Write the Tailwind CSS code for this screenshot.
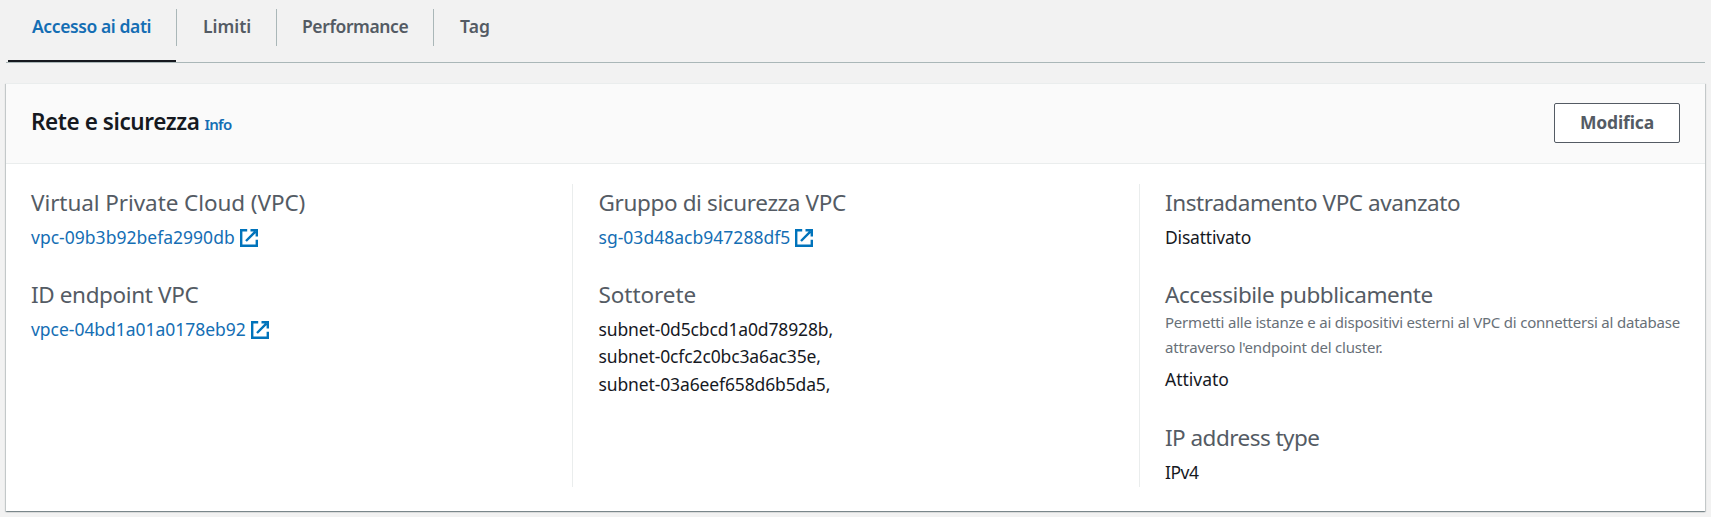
<!DOCTYPE html>
<html lang="it">
<head>
<meta charset="utf-8">
<title>Rete e sicurezza</title>
<script src="https://cdn.jsdelivr.net/npm/@tailwindcss/browser@4"></script>
</head>
<body class="h-[517px] overflow-hidden bg-[#f2f2f2] font-['Noto_Sans',sans-serif] text-[17.5px] leading-[27.5px] text-[#16191f]">
<svg class="hidden">
  <symbol id="ext" viewBox="0 0 18 18">
    <path d="M7.2 1.2H1.2v15.6h15.6V10.8M6 12L15.3 2.7M10.5 1.2h6.3V7.5" fill="none" stroke="currentColor" stroke-width="2.4"/>
  </symbol>
</svg>

<nav class="ml-[6px] mr-[6px] flex h-[63px] border-b border-[#aab7b8] font-semibold text-[#545b64]">
  <a class="ml-[2px] h-[62px] w-[168px] border-b-2 border-[#16191f] pl-[24px] pt-[13px] tracking-[-0.4px] whitespace-nowrap text-[#146eb4]">Accesso ai dati</a>
  <a class="mt-[9px] h-[37px] w-[100px] border-l border-[#aab7b8] pl-[26px] pt-[4px]">Limiti</a>
  <a class="mt-[9px] h-[37px] w-[157px] border-l border-[#aab7b8] pl-[25px] pt-[4px] tracking-[-0.4px]">Performance</a>
  <a class="mt-[9px] h-[37px] border-l border-[#aab7b8] pl-[26px] pt-[4px] tracking-[0.1px]">Tag</a>
</nav>

<section class="ml-[6px] mr-[6px] mt-[20px] h-[428px] border-t border-[#eaeded] bg-white shadow-[0_1px_1px_0_rgba(0,28,36,0.3),1px_1px_1px_0_rgba(0,28,36,0.15),-1px_1px_1px_0_rgba(0,28,36,0.15)]">
  <header class="flex h-[80px] items-start justify-between border-b border-[#eaeded] bg-[#fafafa] pl-[25px] pr-[25px]">
    <h2 class="flex items-baseline gap-[5px] pt-[20px] text-[22.5px] leading-[36px] font-semibold tracking-[-0.42px]">Rete e sicurezza <a class="text-[15px] tracking-[-0.7px] text-[#146eb4]">Info</a></h2>
    <button class="mt-[19px] h-[40px] w-[126px] rounded-[2px] border border-[#545b64] bg-white pb-[1px] font-bold tracking-[-0.15px] text-[#545b64]">Modifica</button>
  </header>

  <div class="mt-[20px] flex h-[303px] text-[#16191f]">
    <div class="w-[566px] pl-[25px]">
      <h3 class="pt-[1.5px] text-[22.5px] leading-[33px] tracking-[-0.08px] text-[#545b64]">Virtual Private Cloud (VPC)</h3>
      <a class="mt-[5px] flex items-center gap-[5px] tracking-[0.02px] text-[#146eb4]">vpc-09b3b92befa2990db<svg class="mt-[1px] size-[18px] text-[#0073bb]"><use href="#ext"/></svg></a>
      <h3 class="mt-[26.5px] text-[22.5px] leading-[33px] tracking-[-0.37px] text-[#545b64]">ID endpoint VPC</h3>
      <a class="mt-[5px] flex items-center gap-[5px] tracking-[-0.03px] text-[#146eb4]">vpce-04bd1a01a0178eb92<svg class="mt-[1px] size-[18px] text-[#0073bb]"><use href="#ext"/></svg></a>
    </div>
    <div class="w-[567px] border-l border-[#eaeded] pl-[25.5px]">
      <h3 class="pt-[1.5px] text-[22.5px] leading-[33px] tracking-[-0.37px] text-[#545b64]">Gruppo di sicurezza VPC</h3>
      <a class="mt-[5px] flex items-center gap-[5px] tracking-[0.02px] text-[#146eb4]">sg-03d48acb947288df5<svg class="mt-[1px] size-[18px] text-[#0073bb]"><use href="#ext"/></svg></a>
      <h3 class="mt-[26.5px] text-[22.5px] leading-[33px] tracking-[-0.06px] text-[#545b64]">Sottorete</h3>
      <div class="mt-[5px] tracking-[-0.13px]">
        <p>subnet-0d5cbcd1a0d78928b,</p>
        <p>subnet-0cfc2c0bc3a6ac35e,</p>
        <p>subnet-03a6eef658d6b5da5,</p>
      </div>
    </div>
    <div class="flex-1 border-l border-[#eaeded] pl-[25px]">
      <h3 class="pt-[1.5px] text-[22.5px] leading-[33px] tracking-[-0.43px] text-[#545b64]">Instradamento VPC avanzato</h3>
      <p class="mt-[5px] tracking-[-0.2px]">Disattivato</p>
      <h3 class="mt-[26.5px] text-[22.5px] leading-[33px] tracking-[-0.45px] text-[#545b64]">Accessibile pubblicamente</h3>
      <p class="-mt-[1px] text-[15px] leading-[25px] tracking-[-0.21px] whitespace-nowrap text-[#687078]">Permetti alle istanze e ai dispositivi esterni al VPC di connettersi al database<br>attraverso l'endpoint del cluster.</p>
      <p class="mt-[6px]">Attivato</p>
      <h3 class="mt-[27.5px] text-[22.5px] leading-[33px] tracking-[-0.53px] text-[#545b64]">IP address type</h3>
      <p class="mt-[5px] tracking-[-0.5px]">IPv4</p>
    </div>
  </div>
</section>
</body>
</html>
